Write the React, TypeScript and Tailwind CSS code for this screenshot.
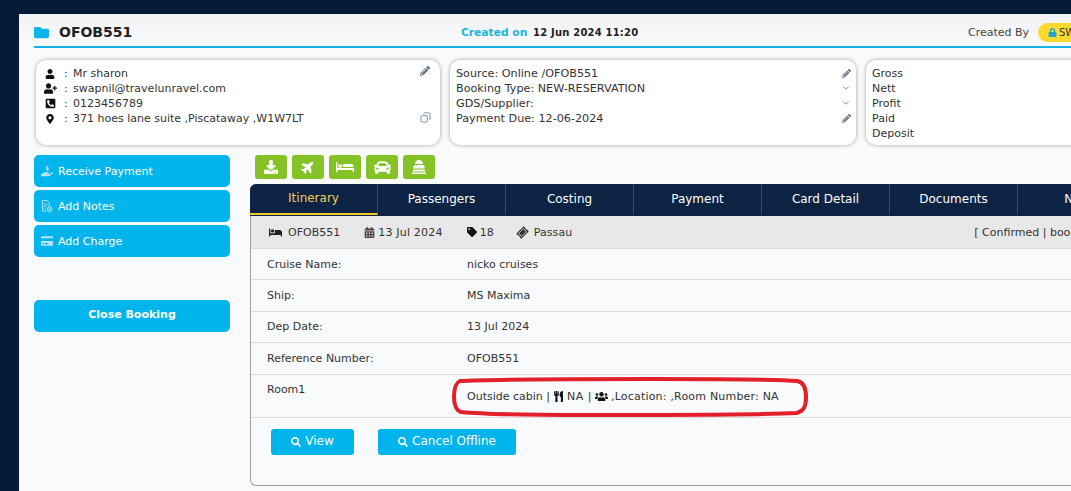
import { FaBed, FaCalendarAlt, FaCar, FaCreditCard, FaDownload, FaFolder, FaLock, FaMapMarkerAlt, FaPencilAlt, FaPhoneSquareAlt, FaPlane, FaSearch, FaTag, FaTicketAlt, FaUser, FaUserPlus, FaUsers, FaUtensils, FaHandHoldingUsd } from 'react-icons/fa';
import { ChevronDown, Copy } from 'lucide-react';

const tabs = ['Itinerary', 'Passengers', 'Costing', 'Payment', 'Card Detail', 'Documents', 'Notes'];

const rows = [
  { label: 'Cruise Name:', value: 'nicko cruises' },
  { label: 'Ship:', value: 'MS Maxima' },
  { label: 'Dep Date:', value: '13 Jul 2024' },
  { label: 'Reference Number:', value: 'OFOB551' },
];

const contact = [
  { icon: <FaUser size={10} />, text: 'Mr sharon' },
  { icon: <FaUserPlus size={13} />, text: 'swapnil@travelunravel.com' },
  { icon: <FaPhoneSquareAlt size={11} />, text: '0123456789' },
  { icon: <FaMapMarkerAlt size={10} />, text: '371 hoes lane suite ,Piscataway ,W1W7LT' },
];

// page with lines and a round plus, as on the Add Notes button
const NotesIcon = () => (
  <svg width="13" height="14" viewBox="0 0 13 14" fill="none" stroke="currentColor" strokeWidth="1">
    <path d="M6 12.5H1.5V1h5l2.5 2.5V7M3 5h4M3 7.5h3M3 10h2" />
    <circle cx="9.5" cy="10.5" r="2.7" />
    <path d="M9.5 9v3M8 10.5h3" />
  </svg>
);

const sideActions = [
  { icon: <FaHandHoldingUsd size={12} />, label: 'Receive Payment' },
  { icon: <NotesIcon />, label: 'Add Notes' },
  { icon: <FaCreditCard size={12} />, label: 'Add Charge' },
];

// cruise ship glyph, the icon packs only have a side-on freighter
const CruiseIcon = () => (
  <svg width="18" height="16" viewBox="0 0 18 16" fill="currentColor">
    <path d="M5 5C5 2.500 7 1 9 1s4 1.500 4 4zM4 6h10l1 3.500H3zM3.500 10.500h11l1 2H2.500zM2 13.500h14V15H2z" />
  </svg>
);

// old style bed with a tall head post and a flat mattress
const BedIcon = () => (
  <svg width="18" height="14" viewBox="0 0 18 14" fill="currentColor">
    <path d="M0 2h1.500v6H18v4h-1.500v-2h-15v2H0zM2.500 4.500h3.500v3H2.500zM7 4h8.500c1 0 2 .8 2 2v1H7z" />
  </svg>
);

const greenIcons = [
  <FaDownload size={14} key="download" />,
  <FaPlane size={14} key="plane" className="-rotate-45" />,
  <BedIcon key="bed" />,
  <FaCar size={17} key="car" />,
  <CruiseIcon key="cruise" />,
];

const cardClass = 'h-[85px] shrink-0 rounded-[10px] bg-white shadow-[0_0_4px_rgba(0,0,0,0.35)]';

export default function App() {
  return (
    <div className="h-[491px] w-[1071px] overflow-hidden bg-[#071a38] pl-[19px] pt-[14px] text-[11px] leading-[15px] text-[#333] [font-family:'DejaVu_Sans',sans-serif]">
      <div className="h-[477px] w-[1300px] bg-gradient-to-b from-[#f1f2f4] to-[#f9fafc] to-[6%] pl-[15px]">
        {/* header */}
        <div className="flex h-[34px] w-[1200px] items-center border-b-2 border-[#14b3e2] pt-[4px]">
          <FaFolder size={15} className="text-[#0db4ea]" />
          <span className="ml-[10px] w-[402px] text-[14px] font-bold text-[#222]">OFOB551</span>
          <span className="w-[72px] text-[10.7px] font-bold text-[#22b4e0]">Created on</span>
          <span className="w-[435px] text-[10px] font-bold tracking-[0.2px] text-[#222]">12 Jun 2024 11:20</span>
          <span className="w-[70px] text-[11px] text-[#444]">Created By</span>
          <span className="flex h-[19px] w-[80px] items-center gap-[2px] rounded-full bg-[#fbd92f] pl-[10px] text-[10px]">
            <FaLock size={9} className="text-[#1fa6c9]" />SWAPNIL
          </span>
        </div>

        {/* summary cards */}
        <div className="mt-[12px] flex gap-[10px] pl-[2px]">
          <div className={`${cardClass} relative w-[404px] pl-[7px] pt-[6px]`}>
            {contact.map((item) => (
              <div key={item.text} className="flex items-center">
                <span className="flex w-[14px] justify-center text-[#111]">{item.icon}</span>
                <span className="ml-[7px] w-[9px]">:</span>
                <span>{item.text}</span>
              </div>
            ))}
            <FaPencilAlt size={10} className="absolute right-[10px] top-[6px] text-[#5d7286]" />
            <Copy size={11} className="absolute right-[9px] top-[52px] -scale-x-100 text-[#7a8a99]" />
          </div>
          <div className={`${cardClass} relative w-[406px] pl-[6px] pt-[6px] text-[11.2px]`}>
            <div>Source: Online /OFOB551</div>
            <div>Booking Type: NEW-RESERVATION</div>
            <div>GDS/Supplier:</div>
            <div>Payment Due: 12-06-2024</div>
            <FaPencilAlt size={9} className="absolute right-[5px] top-[9px] text-[#6a7a88]" />
            <ChevronDown size={10} className="absolute right-[5px] top-[23px] text-[#6f7f8d]" />
            <ChevronDown size={10} className="absolute right-[5px] top-[38px] text-[#6f7f8d]" />
            <FaPencilAlt size={9} className="absolute right-[5px] top-[54px] text-[#6a7a88]" />
          </div>
          <div className={`${cardClass} w-[300px] pl-[6px] pt-[6px]`}>
            <div>Gross</div>
            <div>Nett</div>
            <div>Profit</div>
            <div>Paid</div>
            <div>Deposit</div>
          </div>
        </div>

        <div className="mt-[10px] flex">
          {/* left actions */}
          <div className="w-[196px] shrink-0">
            <div className="flex flex-col gap-[3px]">
              {sideActions.map((action) => (
                <button key={action.label} className="flex h-[32px] items-center gap-[5px] rounded-[5px] bg-[#00b5ec] pl-[7px] text-[11px] font-medium text-white">
                  <span className="flex w-[12px] justify-center text-[#b9e6f5]">{action.icon}</span>
                  {action.label}
                </button>
              ))}
            </div>
            <button className="mt-[43px] h-[32px] w-full rounded-[5px] bg-[#00b5ec] pb-[4px] text-[11px] font-bold text-white">Close Booking</button>
          </div>

          {/* booking detail */}
          <div className="ml-[20px] w-[960px] shrink-0">
            <div className="ml-[5px] flex gap-[5px]">
              {greenIcons.map((icon) => (
                <button key={icon.key} className="flex h-[24px] w-[32px] items-center justify-center rounded-[3px] bg-[#85c226] text-white">{icon}</button>
              ))}
            </div>
            <div className="mt-[5px] h-[302px] rounded-[6px] border-b border-l border-[#9aa0a6]">
              <div className="-ml-[1px] flex h-[32px] overflow-hidden rounded-t-[6px] bg-[#0c2344] pb-[1px] text-[12px] text-white">
                {tabs.map((tab, i) => (
                  <div key={tab} className={`flex w-[128px] shrink-0 items-center justify-center border-r border-[#34496a] ${i === 0 ? 'border-b-2 border-b-[#f5c82e] text-[#f5d04a]' : ''}`}>
                    {tab}
                  </div>
                ))}
              </div>
              <div className="flex h-[32px] items-center bg-[#e8e8e8] pl-[18px] text-[#333]">
                <FaBed size={13} className="text-[#222]" />
                <span className="ml-[6px]">OFOB551</span>
                <FaCalendarAlt size={11} className="ml-[24px] text-[#444]" />
                <span className="ml-[3px] tracking-[0.2px]">13 Jul 2024</span>
                <FaTag size={10} className="ml-[24px] text-[#111]" />
                <span className="ml-[3px]">18</span>
                <FaTicketAlt size={11} className="ml-[23px] -rotate-45 text-[#333]" />
                <span className="ml-[6px] tracking-[0.1px]">Passau</span>
                <span className="ml-[402px] whitespace-nowrap">[ Confirmed | booking ]</span>
              </div>
              {rows.map((row) => (
                <div key={row.label} className="flex h-[31.4px] items-center border-t border-[#dcdcdc] pl-[16px]">
                  <span className="w-[200px]">{row.label}</span>
                  <span>{row.value}</span>
                </div>
              ))}
              <div className="relative flex h-[44px] border-y border-[#dcdcdc] pl-[16px]">
                <span className="mt-[7px] w-[200px]">Room1</span>
                <span className="mt-[14px] flex h-[15px] items-center gap-[3px] whitespace-pre">
                  <span>Outside cabin |</span>
                  <FaUtensils size={11} className="text-[#111]" />
                  <span className="tracking-[0.5px]">NA |</span>
                  <FaUsers size={13} className="text-[#111]" />
                  <span className="tracking-[0.2px]">,Location: ,Room Number: NA</span>
                </span>
                {/* red annotation round the room text */}
                <svg className="absolute left-[201px] top-[2px] h-[40px] w-[356px]" viewBox="0 0 356 40" fill="none">
                  <path d="M8 4 C40 2 100 2 200 2 C270 2 320 2 345 4 C352 5 354 11 354 20 C354 29 352 34 345 36 C300 38 200 38 130 38 C80 38 30 37 9 35 C3 33 2 27 2 20 C2 12 3 6 8 4 Z" stroke="#e3202a" strokeWidth="4" />
                </svg>
              </div>
              <div className="ml-[20px] mt-[11px] flex gap-[24px]">
                <button className="flex h-[26px] w-[83px] items-center justify-center gap-[4px] rounded-[3px] bg-[#00b5ec] text-[12px] font-medium text-white">
                  <FaSearch size={10} />View
                </button>
                <button className="flex h-[26px] w-[138px] items-center justify-center gap-[4px] rounded-[3px] bg-[#00b5ec] text-[12px] font-medium text-white">
                  <FaSearch size={10} />Cancel Offline
                </button>
              </div>
            </div>
          </div>
        </div>
      </div>
    </div>
  );
}
